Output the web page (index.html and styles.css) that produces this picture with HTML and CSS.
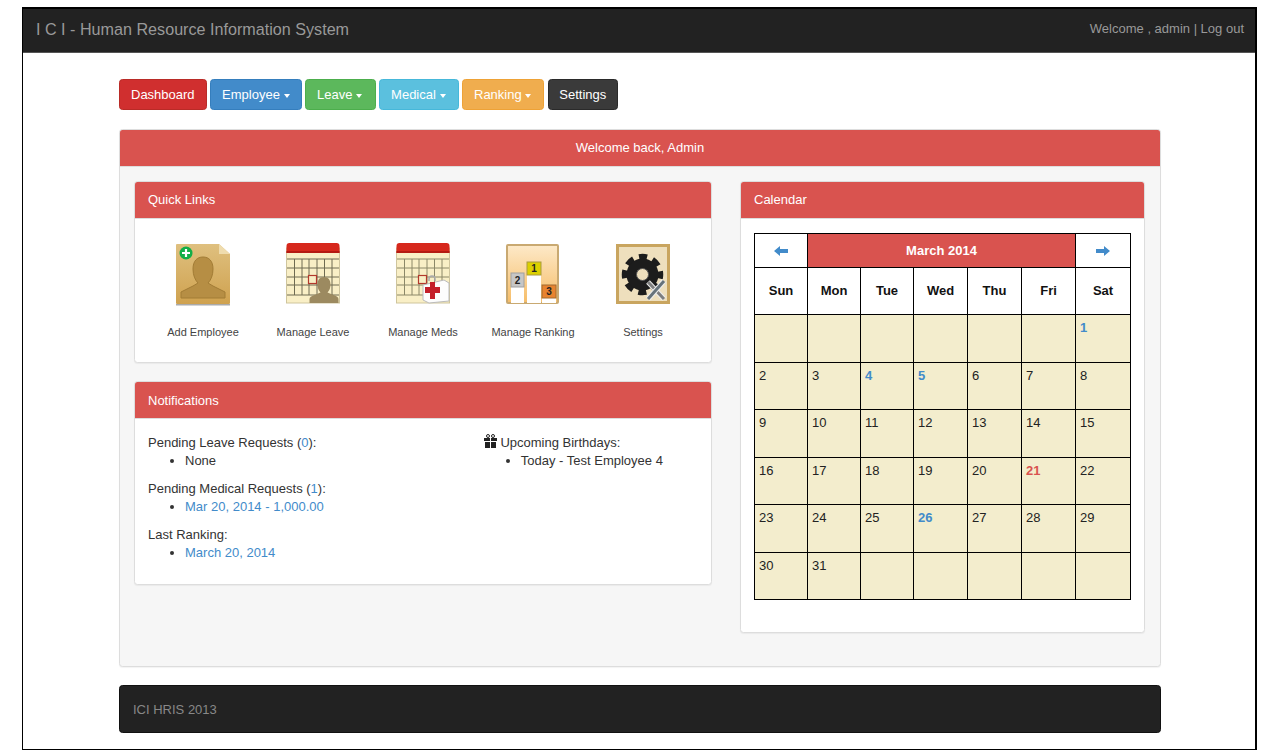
FILE: index.html
```html
<!DOCTYPE html>
<html lang="en">
<head>
<meta charset="utf-8">
<title>ICI HRIS</title>
<link rel="stylesheet" href="styles.css">
</head>
<body>
<div class="frame">
  <header class="navbar">
    <span class="brand">I C I - Human Resource Information System</span>
    <span class="userbox">Welcome , admin | Log out</span>
  </header>
  <div class="container">
    <nav class="menu">
      <a class="btn btn-red">Dashboard</a>
      <a class="btn btn-blue">Employee <i class="caret"></i></a>
      <a class="btn btn-green">Leave <i class="caret"></i></a>
      <a class="btn btn-cyan">Medical <i class="caret"></i></a>
      <a class="btn btn-orange">Ranking <i class="caret"></i></a>
      <a class="btn btn-dark">Settings</a>
    </nav>
    <section class="panel main-panel">
      <div class="panel-head center">Welcome back, Admin</div>
      <div class="main-body">
        <div class="col-left">
          <section class="panel">
            <div class="panel-head">Quick Links</div>
            <div class="links">
              <a class="link">
                <svg class="icon" viewBox="0 0 56 64" width="56" height="64">
                  <defs>
                    <linearGradient id="cardbg" x1="0" y1="0" x2="0" y2="1">
                      <stop offset="0" stop-color="#dfc07f"/>
                      <stop offset="1" stop-color="#cfa24f"/>
                    </linearGradient>
                  </defs>
                  <path d="M1 64h54v1.500H1z" fill="#aaa"/>
                  <path d="M2 4h42l11 10v49a1 1 0 0 1-1 1H2a1 1 0 0 1-1-1V5a1 1 0 0 1 1-1z" fill="url(#cardbg)"/>
                  <path d="M44 4l11 10H44z" fill="#efdcae"/>
                  <path d="M6 58v-6l12-6 5-3c-3-3-5-8-5-14 0-8 4-12 10-12s10 4 10 12c0 6-2 11-5 14l5 3 12 6v6z" fill="#b68e44" stroke="#a27c35"/>
                  <circle cx="11" cy="13" r="6.500" fill="#12ae48"/>
                  <path d="M11 9v8M7 13h8" stroke="#fff" stroke-width="2.200"/>
                </svg>
                <span>Add Employee</span>
              </a>
              <a class="link">
                <svg class="icon" viewBox="0 0 56 64" width="56" height="64">
                  <rect x="1.500" y="8" width="53" height="55" fill="#f9efc6" stroke="#cfc59d"/>
                  <path d="M1.500 6a3 3 0 0 1 3-3h47a3 3 0 0 1 3 3v7h-53z" fill="#d6281c"/>
                  <path d="M1.500 11h53v2h-53z" fill="#b41a12"/>
                  <path d="M2 19h52M2 28h52M2 37h52M2 45h52M2 55h52M9.500 19v36M17 19v36M24 19v36M32 19v36M39.500 19v36M47 19v36" stroke="#6f6b52" stroke-width="1" fill="none"/>
                  <rect x="23.500" y="35.500" width="8" height="8" fill="#f9efc6" stroke="#b3392c" stroke-width="1.200"/>
                  <path d="M24.500 63v-4c0-2 2-3 5-4l6-2.500c-2-2-3-5-3-8 0-4.500 2-7.500 6.500-7.500s6.500 3 6.500 7.500c0 3-1 6-3 8l6 2.500c3 1 5 2 5 4v4z" fill="#9c8a60"/>
                </svg>
                <span>Manage Leave</span>
              </a>
              <a class="link">
                <svg class="icon" viewBox="0 0 56 64" width="56" height="64">
                  <rect x="1.500" y="8" width="53" height="55" fill="#f9efc6" stroke="#cfc59d"/>
                  <path d="M1.500 6a3 3 0 0 1 3-3h47a3 3 0 0 1 3 3v7h-53z" fill="#d6281c"/>
                  <path d="M1.500 11h53v2h-53z" fill="#b41a12"/>
                  <path d="M2 19h52M2 28h52M2 37h52M2 45h52M2 55h52M9.500 19v36M17 19v36M24 19v36M32 19v36M39.500 19v36M47 19v36" stroke="#8c8868" stroke-width="1" fill="none"/>
                  <rect x="23.500" y="35.500" width="8" height="8" fill="#f9efc6" stroke="#b3392c" stroke-width="1.200"/>
                  <path d="M34 41v-2a3 3 0 0 1 6 0v2" fill="none" stroke="#aaa" stroke-width="1.500"/>
                  <path d="M28 45l21-5 5 3v18l-20 2-6-3z" fill="#fdfdfd" stroke="#bbb"/>
                  <path d="M35 42h5v5h5v6h-5v6h-5v-6h-5v-6h5z" fill="#c4202a"/>
                </svg>
                <span>Manage Meds</span>
              </a>
              <a class="link">
                <svg class="icon" viewBox="0 0 56 64" width="56" height="64">
                  <defs>
                    <linearGradient id="rankbg" x1="0" y1="0" x2="0" y2="1">
                      <stop offset="0" stop-color="#fde9c8"/>
                      <stop offset="1" stop-color="#f6bd68"/>
                    </linearGradient>
                  </defs>
                  <rect x="2" y="5" width="51" height="58" rx="1" fill="url(#rankbg)" stroke="#c9a971" stroke-width="2"/>
                  <rect x="6" y="33" width="13" height="30" fill="#fff"/>
                  <rect x="6" y="33" width="13" height="14" fill="#c6c6c6" stroke="#a0a0a0"/>
                  <rect x="22" y="22" width="14" height="41" fill="#fff"/>
                  <rect x="22" y="22" width="14" height="13" fill="#dcd000" stroke="#a89a40"/>
                  <rect x="37" y="45" width="14" height="18" fill="#fff"/>
                  <rect x="37" y="45" width="14" height="13" fill="#e8832f" stroke="#a06a30"/>
                  <text x="12.500" y="44" class="rank-num">2</text>
                  <text x="29" y="32" class="rank-num">1</text>
                  <text x="44" y="55" class="rank-num">3</text>
                </svg>
                <span>Manage Ranking</span>
              </a>
              <a class="link">
                <svg class="icon" viewBox="0 0 56 64" width="56" height="64">
                  <rect x="2.500" y="5.500" width="51" height="57" fill="#eedfbd" stroke="#c9a55f" stroke-width="3"/>
                  <circle cx="27.500" cy="34.500" r="17.500" fill="none" stroke="#1c1c1c" stroke-width="6.500" stroke-dasharray="8 5.744" stroke-dashoffset="4"/>
                  <circle cx="27.500" cy="34.500" r="16" fill="#1c1c1c"/>
                  <circle cx="27.500" cy="34.500" r="6" fill="#eedfbd" stroke="#555"/>
                  <path d="M33 42l16 17" stroke="#eee" stroke-width="5"/>
                  <path d="M33 42l16 17" stroke="#7e7e7e" stroke-width="3"/>
                  <path d="M49 41L33 59" stroke="#eee" stroke-width="5"/>
                  <path d="M49 41L33 59" stroke="#66727a" stroke-width="3"/>
                </svg>
                <span>Settings</span>
              </a>
            </div>
          </section>
          <section class="panel notif">
            <div class="panel-head">Notifications</div>
            <div class="notif-body">
              <div class="notif-col">
                <p>Pending Leave Requests (<a>0</a>):</p>
                <ul><li>None</li></ul>
                <p>Pending Medical Requests (<a>1</a>):</p>
                <ul><li><a>Mar 20, 2014 - 1,000.00</a></li></ul>
                <p>Last Ranking:</p>
                <ul><li><a>March 20, 2014</a></li></ul>
              </div>
              <div class="notif-col">
                <p><svg class="gift" viewBox="0 0 13 14" width="13" height="14"><path d="M0 4h6v3H0zM7 4h6v3H7zM1 8h5v6H1zM7 8h5v6H7z" fill="#222"/><circle cx="4" cy="2" r="1.500" fill="none" stroke="#222"/><circle cx="9" cy="2" r="1.500" fill="none" stroke="#222"/></svg> Upcoming Birthdays:</p>
                <ul><li>Today - Test Employee 4</li></ul>
              </div>
            </div>
          </section>
        </div>
        <section class="panel col-right">
          <div class="panel-head">Calendar</div>
          <div class="cal-wrap">
            <table class="cal">
              <colgroup>
                <col class="w53"><col class="w53"><col class="w53"><col class="w54"><col class="w54"><col class="w54"><col class="w55">
              </colgroup>
              <tr class="cal-nav">
                <td><svg viewBox="0 0 14 10" width="14" height="10"><path d="M0 5l6-5v3h8v4H6v3z" fill="#428bca"/></svg></td>
                <td colspan="5" class="cal-title">March 2014</td>
                <td><svg viewBox="0 0 14 10" width="14" height="10"><path d="M14 5L8 0v3H0v4h8v3z" fill="#428bca"/></svg></td>
              </tr>
              <tr class="cal-days"><th>Sun</th><th>Mon</th><th>Tue</th><th>Wed</th><th>Thu</th><th>Fri</th><th>Sat</th></tr>
              <tr><td></td><td></td><td></td><td></td><td></td><td></td><td class="ev">1</td></tr>
              <tr><td>2</td><td>3</td><td class="ev">4</td><td class="ev">5</td><td>6</td><td>7</td><td>8</td></tr>
              <tr><td>9</td><td>10</td><td>11</td><td>12</td><td>13</td><td>14</td><td>15</td></tr>
              <tr><td>16</td><td>17</td><td>18</td><td>19</td><td>20</td><td class="today">21</td><td>22</td></tr>
              <tr><td>23</td><td>24</td><td>25</td><td class="ev">26</td><td>27</td><td>28</td><td>29</td></tr>
              <tr><td>30</td><td>31</td><td></td><td></td><td></td><td></td><td></td></tr>
            </table>
          </div>
        </section>
      </div>
    </section>
    <footer class="footer">ICI HRIS 2013</footer>
  </div>
</div>
</body>
</html>
```
FILE: styles.css
```css
* { box-sizing: border-box; }
html, body { margin: 0; padding: 0; background: #fff; }
body {
  font-family: "Liberation Sans", Arial, sans-serif;
  font-size: 13px;
  line-height: 18px;
  color: #333;
}
.frame {
  width: 1235px;
  height: 743px;
  margin: 7px 0 0 22px;
  border: 1px solid #000;
  border-top-width: 2px;
  border-right-width: 2px;
  overflow: hidden;
}
.navbar {
  height: 44px;
  background: #222;
  border-bottom: 1px solid #555;
  display: flex;
  align-items: center;
  justify-content: space-between;
  padding: 0 11px 4px 13px;
  color: #999;
}
.brand { font-size: 16.150px; }
.userbox { font-size: 13px; }
.container { padding: 26px 94px 0 96px; }
.menu { display: flex; gap: 3.500px; height: 31px; }
.btn {
  height: 31px;
  padding: 0 11px;
  line-height: 29px;
  color: #fff;
  border-radius: 3.500px;
  border: 1px solid transparent;
  display: block;
  white-space: nowrap;
}
.btn-red { background: #d02f2f; border-color: #b92b27; }
.btn-blue { background: #428bca; border-color: #357ebd; }
.btn-green { background: #5cb85c; border-color: #4cae4c; padding-right: 12.500px; }
.btn-cyan { background: #5bc0de; border-color: #46b8da; padding-right: 12px; }
.btn-orange { background: #f0ad4e; border-color: #eea236; padding-right: 12px; }
.btn-dark { background: #3a3a3a; border-color: #2a2a2a; padding: 0 10.500px; }
.caret {
  display: inline-block;
  width: 0;
  height: 0;
  margin-left: 0;
  vertical-align: middle;
  border-top: 4px solid #fff;
  border-left: 3.500px solid transparent;
  border-right: 3.500px solid transparent;
}
.panel {
  background: #fff;
  border: 1px solid #ddd;
  border-radius: 3.500px;
  box-shadow: 0 1px 1px rgba(0,0,0,.05);
  overflow: hidden;
}
.panel-head {
  background: #d9534f;
  color: #fff;
  height: 37px;
  line-height: 36px;
  padding: 0 13px;
  border-bottom: 1px solid #ddd;
}
.center { text-align: center; }
.main-panel {
  margin-top: 19px;
  height: 538px;
  background: #f6f6f6;
}
.main-body {
  display: flex;
  gap: 28px;
  padding: 14px 15px 0 14px;
  align-items: flex-start;
}
.col-left { width: 578px; }
.col-right { width: 405px; height: 452px; }
.links {
  display: flex;
  height: 143px;
  padding: 21px 0 0 13px;
}
.link {
  width: 110px;
  display: flex;
  flex-direction: column;
  align-items: center;
  font-size: 11px;
  color: #444;
}
.icon { display: block; height: 64px; margin-bottom: 19px; overflow: visible; }
.rank-num {
  font-family: "Liberation Sans", Arial, sans-serif;
  font-size: 10px;
  font-weight: bold;
  text-anchor: middle;
  fill: #222;
}
.notif { margin-top: 18px; height: 204px; }
.notif .panel-head { line-height: 37px; }
.notif-body { display: flex; padding: 15px 13px 0; }
.notif-col { width: 337px; }
.notif-col:last-child { width: 215px; }
.notif-col p { margin: 0; }
.notif-col ul { margin: 0 0 10px; padding-left: 37px; }
.notif-col a { color: #428bca; }
.gift { vertical-align: -1px; }
.cal-wrap { padding: 14px 13px 0; }
.cal {
  border-collapse: collapse;
  table-layout: fixed;
  width: 376px;
  height: 367px;
  font-size: 13px;
}
.w53 { width: 53px; }
.w54 { width: 54px; }
.w55 { width: 55px; }
.cal td, .cal th { border: 1px solid #000; padding: 0; }
.cal td {
  vertical-align: top;
  background: #f3edcd;
  padding: 4px 4px;
  color: #222;
  height: 47.500px;
}
.cal .cal-nav td {
  height: 34px;
  background: #fff;
  text-align: center;
  vertical-align: middle;
  padding: 0;
}
.cal .cal-nav svg { display: block; margin: 0 auto; }
.cal .cal-nav .cal-title {
  background: #d9534f;
  color: #fff;
  font-weight: bold;
}
.cal-days th {
  height: 47px;
  background: #fff;
  color: #111;
  text-align: center;
  font-weight: bold;
}
.cal .ev { color: #428bca; font-weight: bold; }
.cal .today { color: #d9534f; font-weight: bold; }
.footer {
  margin-top: 18px;
  height: 48px;
  background: #222;
  border-radius: 3.500px;
  border: 1px solid #111;
  color: #888;
  line-height: 47px;
  padding-left: 13px;
}
```
